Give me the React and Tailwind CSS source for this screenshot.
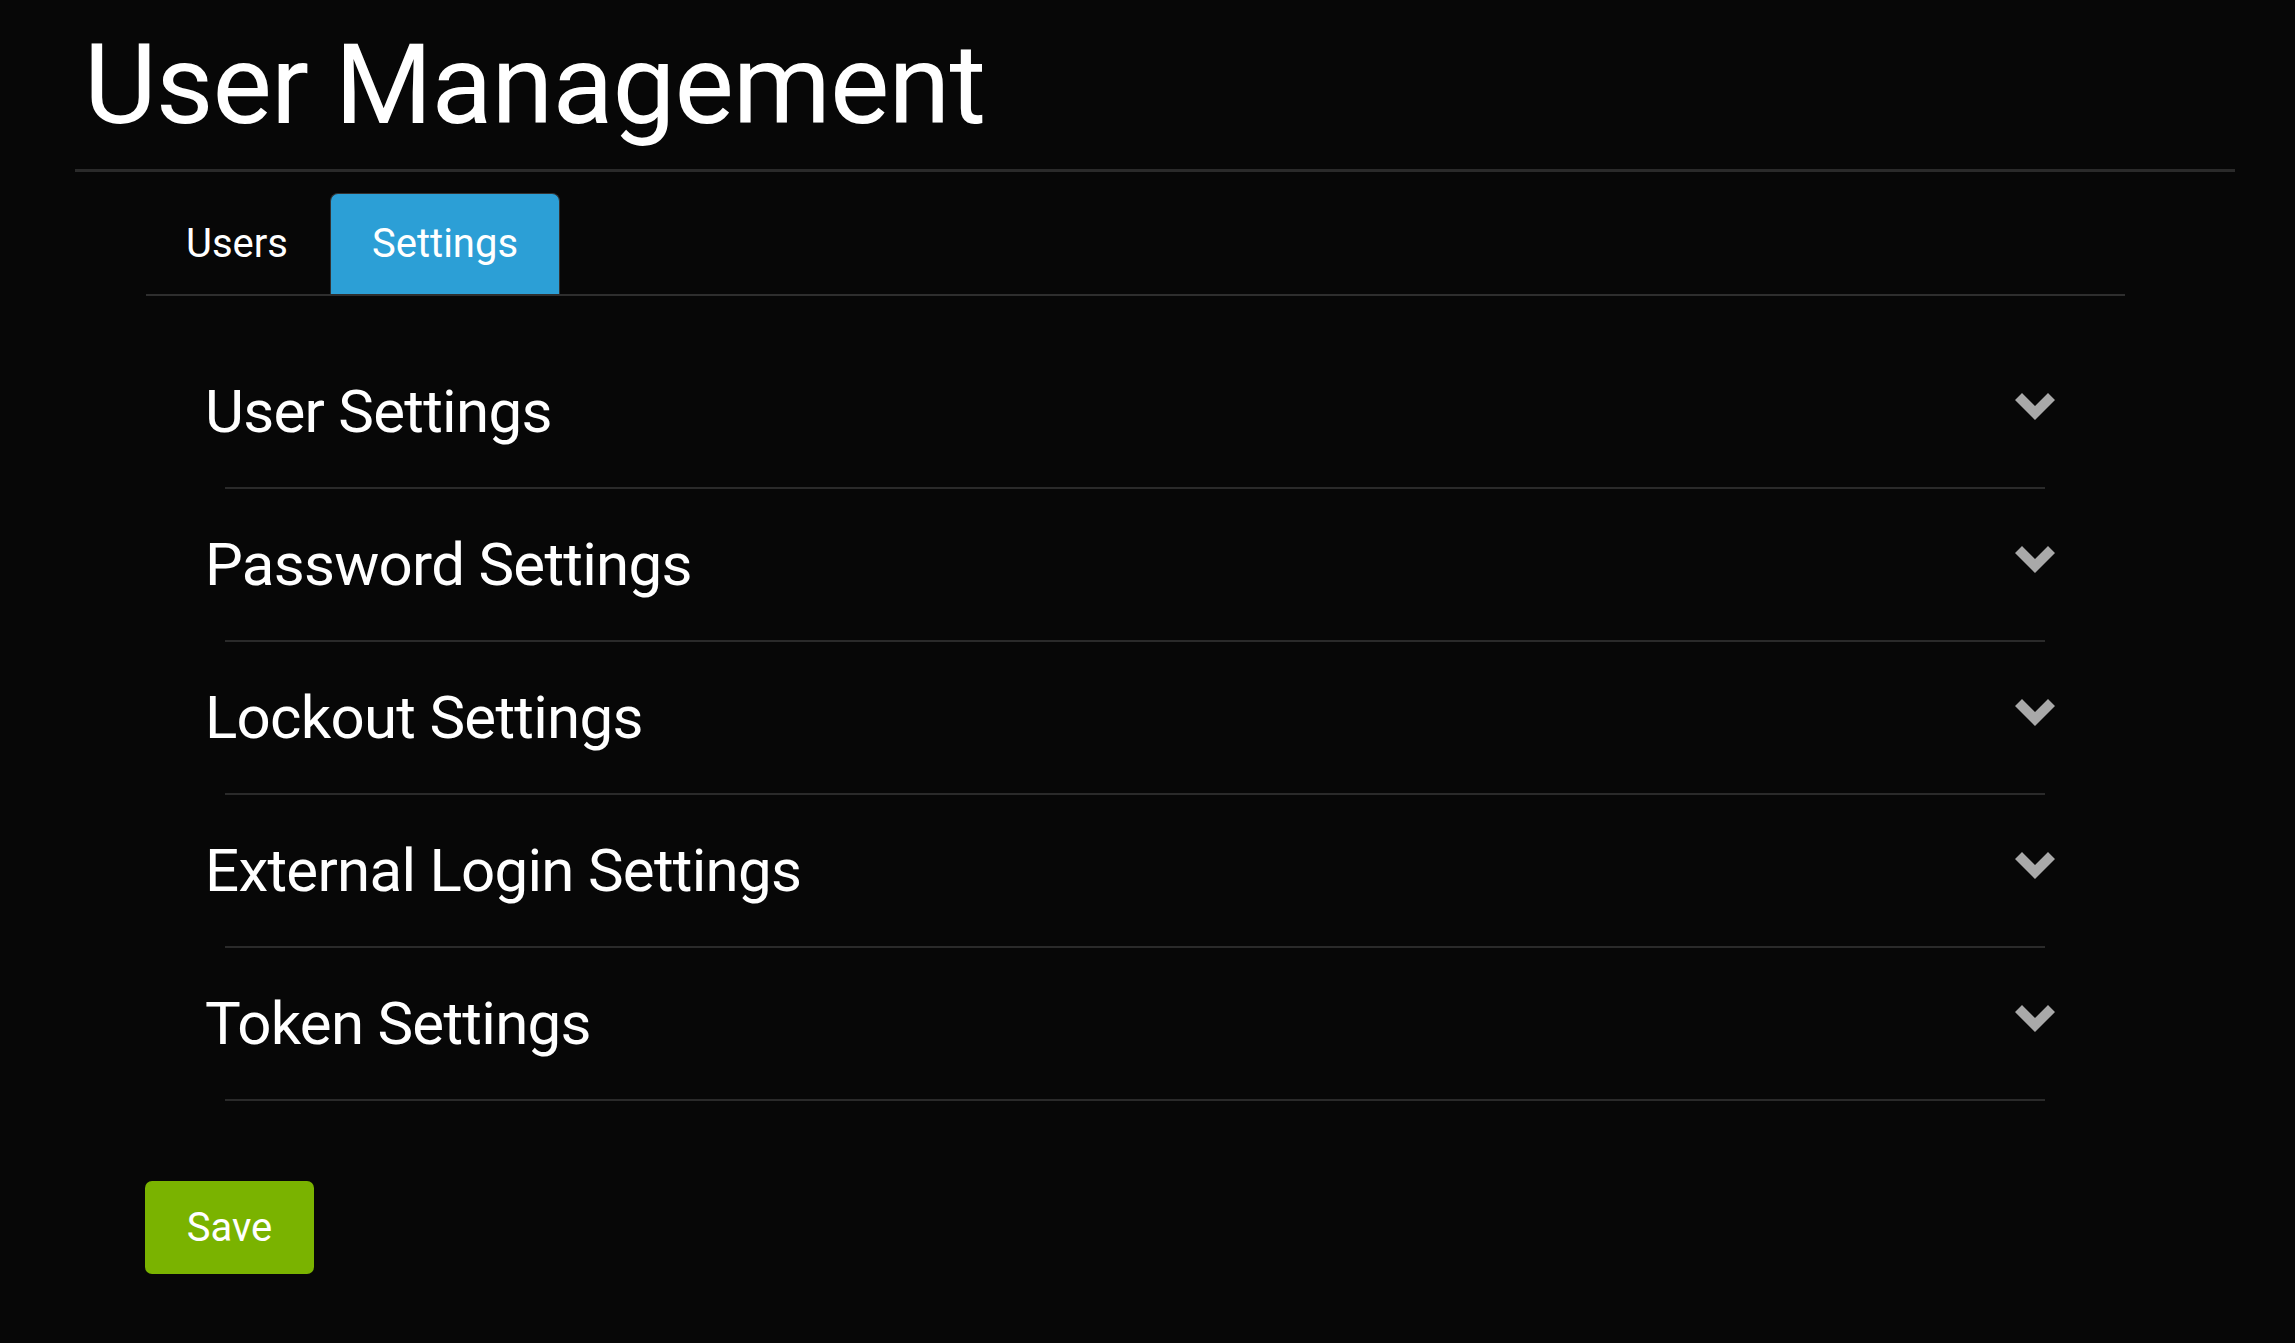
import React from 'react';

const sections = [
  'User Settings',
  'Password Settings',
  'Lockout Settings',
  'External Login Settings',
  'Token Settings',
];

const Chevron = () => (
  <svg width="40" height="27" viewBox="0 0 40 27" className="mb-[10px] shrink-0">
    <polygon points="0,7 7,0 20,13 33,0 40,7 20,27" fill="#a9a9a9" />
  </svg>
);

export default function App() {
  return (
    <div className="min-h-screen bg-[#070707] text-white font-['Roboto',sans-serif] pb-[60px]">
      {/* Page header */}
      <div className="ml-[75px] mr-[60px] pl-[9px] pt-[29px] pb-[28px] border-b-[3px] border-[#2a2a2a]">
        <h1 className="text-[112px] leading-none font-normal tracking-[-0.0085em]">User Management</h1>
      </div>

      {/* Tabs */}
      <div className="ml-[146px] w-[1979px] mt-[21px] flex items-end border-b-2 border-[#2e2e2e]">
        <button className="h-[101px] px-[40px] mr-[2px] text-[40px] leading-none text-white">
          Users
        </button>
        <button className="h-[101px] px-[41px] text-[40px] leading-none text-white bg-[#2c9fd6] border border-b-0 border-[#333] rounded-t-[8px]">
          Settings
        </button>
      </div>

      {/* Accordion */}
      <div className="ml-[205px] w-[1850px] mt-[40px]">
        {sections.map((title) => (
          <div key={title}>
            <div className="h-[151px] flex items-center justify-between">
              <span className="text-[60px] leading-none tracking-[-0.012em]">{title}</span>
              <Chevron />
            </div>
            <div className="ml-[20px] mr-[10px] h-[2px] bg-[#2a2a2a]" />
          </div>
        ))}
      </div>

      <div className="ml-[145px] mt-[80px]">
        <button className="w-[169px] h-[93px] rounded-[7px] bg-[#7ab300] text-[40px] leading-none text-white">
          Save
        </button>
      </div>
    </div>
  );
}
